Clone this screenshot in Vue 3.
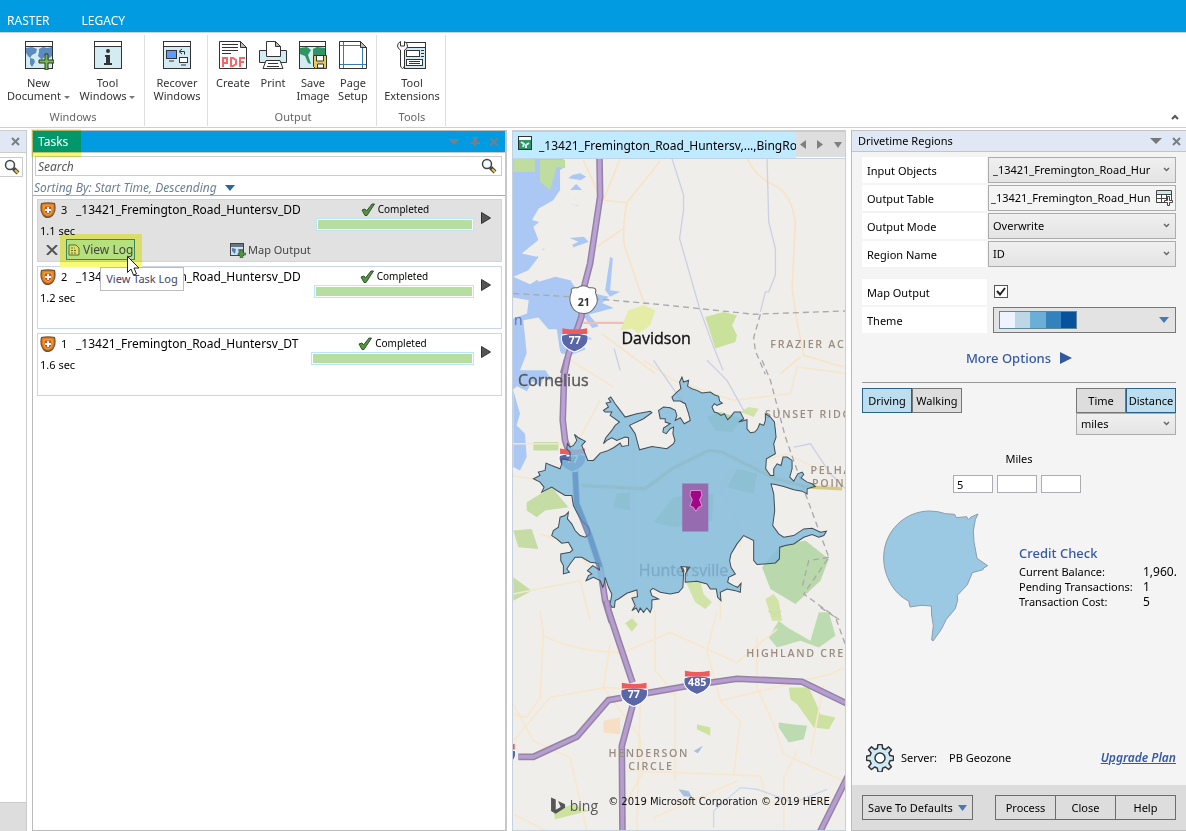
<script setup>
import { ref } from 'vue'

const tasks = ref([
  { id: 3, name: '_13421_Fremington_Road_Huntersv_DD', time: '1.1 sec', bar: 158, active: true },
  { id: 2, name: '_13421_Fremington_Road_Huntersv_DD', time: '1.2 sec', bar: 160, active: false },
  { id: 1, name: '_13421_Fremington_Road_Huntersv_DT', time: '1.6 sec', bar: 163, active: false }
])
const swatches = ['#eff3ff', '#bdd7e7', '#6baed6', '#3182bd', '#08519c']
const mapOutput = ref(true)
const miles = ref(['5', '', ''])
const mode = ref('Driving')
const measure = ref('Distance')
</script>

<template>
  <div class="app">
    <nav class="tabs">
      <a href="#raster">RASTER</a>
      <a href="#legacy">LEGACY</a>
    </nav>

    <header class="ribbon">
      <section class="group windows">
        <div class="tools">
          <button class="tool wide">
            <svg width="30" height="30" viewBox="0 0 30 30">
              <rect x="1.500" y="1.500" width="27" height="27" fill="#fff" stroke="#333" />
              <rect x="2" y="6" width="26" height="22" fill="#d3ecf3" />
              <path d="M2 8l6-1 5 2-1 4-4 2-2 3-2-2-2-3zM6 18l4 1 1 3-3 5-2-3zM15 9l4-2 4 1 5-1v9l-4 3-3-3-3 4-4-4 1-4z" fill="#5b8bbf" />
              <path d="M1 6.500h28" stroke="#333" />
              <path d="M21 14h3v6h6v3h-6v7h-3v-7h-6v-3h6z" fill="#72be44" stroke="#333" />
            </svg>
            <span>New<br>Document <i class="caret"></i></span>
          </button>
          <button class="tool wide">
            <svg width="30" height="30" viewBox="0 0 30 30">
              <rect x="1.500" y="1.500" width="27" height="27" fill="#d3ecf3" stroke="#333" />
              <path d="M2 2h26v4H2z" fill="#fff" /><path d="M1 6.500h28" stroke="#333" />
              <circle cx="15" cy="11" r="2" fill="#333" />
              <path d="M12 15h5v8h2v2h-8v-2h2v-6h-1z" fill="#333" />
            </svg>
            <span>Tool<br>Windows <i class="caret"></i></span>
          </button>
        </div>
        <h2>Windows</h2>
      </section>

      <section class="group recover">
        <div class="tools">
          <button class="tool">
            <svg width="30" height="30" viewBox="0 0 30 30">
              <rect x="1.500" y="1.500" width="27" height="27" fill="#d3ecf3" stroke="#333" />
              <path d="M2 2h26v4H2z" fill="#fff" /><path d="M1 6.500h28" stroke="#333" />
              <rect x="4.500" y="10.500" width="10" height="8" fill="#5d9bff" stroke="#333" />
              <rect x="17.500" y="17.500" width="8" height="5" fill="#fff" stroke="#333" />
              <path d="M7 21h5M19 25h5M18 11.500h4.500v3M20 9l-3 2.500 3 2.500" stroke="#333" fill="none" />
            </svg>
            <span>Recover<br>Windows</span>
          </button>
        </div>
      </section>

      <section class="group output">
        <div class="tools">
          <button class="tool slim">
            <svg width="30" height="30" viewBox="0 0 30 30">
              <path d="M1.500 1.500h21l6 6v21h-27z" fill="#fff" stroke="#333" />
              <path d="M22.500 1.500v6h6z" fill="#bbb" stroke="#333" />
              <path d="M4 4.500h16M4 7.500h16M4 10.500h16M4 13.500h9" stroke="#333" />
              <path d="M5 27v-9h4v5h-4M13 26v-8h2l3 2v4l-3 2zM22 27v-9h5M22 22h4" fill="none" stroke="#fa6464" stroke-width="2" />
            </svg>
            <span>Create</span>
          </button>
          <button class="tool slim">
            <svg width="30" height="30" viewBox="0 0 30 30">
              <path d="M1.500 10.500h27v12h-27z" fill="#d3ecf3" stroke="#333" />
              <path d="M8.500 16.500v-15h9l5 5v10z" fill="#fff" stroke="#333" />
              <path d="M17.500 1.500v5h5z" fill="#bbb" stroke="#333" />
              <path d="M8 20.500h14l3 8H5z" fill="#fff" stroke="#333" />
              <path d="M10 23.500h10M9 26.500h12" stroke="#333" />
            </svg>
            <span>Print</span>
          </button>
          <button class="tool slim">
            <svg width="30" height="30" viewBox="0 0 30 30">
              <rect x="1.500" y="1.500" width="26" height="27" fill="#d3ecf3" stroke="#333" />
              <path d="M2 2h25v4H2z" fill="#fff" /><path d="M1 6.500h27" stroke="#333" />
              <path d="M2 8l7-1 4 3-3 5 1 3 2 6-3-1-3-7-5-2zM15 9l4-2 8 1v10l-4-3-3 3-5-3z" fill="#2f9563" />
              <path d="M15.500 15.500h13v13h-11l-2-2z" fill="#e4cd55" stroke="#333" />
              <path d="M18.500 16v5h7v-5M19.500 28v-4h6v4z" fill="#fff" stroke="#333" />
            </svg>
            <span>Save<br>Image</span>
          </button>
          <button class="tool slim">
            <svg width="30" height="30" viewBox="0 0 30 30">
              <path d="M1.500 1.500h21l6 6v21h-27z" fill="#fff" stroke="#333" />
              <path d="M5.500 2v26M24.500 7v21M2 5.500h21M2 24.500h26" stroke="#3b79b8" />
              <path d="M22.500 1.500v6h6z" fill="#bbb" stroke="#333" />
            </svg>
            <span>Page<br>Setup</span>
          </button>
        </div>
        <h2>Output</h2>
      </section>

      <section class="group ext">
        <div class="tools">
          <button class="tool">
            <svg width="30" height="30" viewBox="0 0 30 30">
              <rect x="7.500" y="2.500" width="21" height="26" fill="#d3ecf3" stroke="#333" />
              <path d="M8 3h20v4H8z" fill="#fff" /><path d="M7 7.500h22" stroke="#333" />
              <rect x="9.500" y="10.500" width="13" height="6" fill="#fff" stroke="#333" />
              <rect x="9.500" y="19.500" width="16" height="6" fill="#fff" stroke="#333" />
              <path d="M12 21.500h11M12 23.500h11M24 10.500h3M24 13.500h3M24 16.500h3" stroke="#333" />
              <path d="M3.500 1.500Q.5 3 .5 6q.5 3 3 4v16q2 5 4 0V10q3-1 3-4 0-3-3-4.500V6h-4z" fill="#fff" stroke="#333" />
            </svg>
            <span>Tool<br>Extensions</span>
          </button>
        </div>
        <h2>Tools</h2>
      </section>

      <button class="collapse" aria-label="Collapse ribbon">
        <svg width="8" height="6" viewBox="0 0 8 6"><path d="M1 5l3-3 3 3" fill="none" stroke="#555" stroke-width="2" /></svg>
      </button>
    </header>

    <main class="docks">
      <aside class="stub">
        <div class="stub-head"><button aria-label="Close panel"><svg width="9" height="9" viewBox="0 0 9 9"><path d="M1 1l7 7M8 1l-7 7" stroke="#7a7f87" stroke-width="2" /></svg></button></div>
        <button class="stub-search" aria-label="Find">
          <svg width="16" height="16" viewBox="0 0 16 16"><circle cx="6" cy="6" r="4.500" fill="#f3fafd" stroke="#444" stroke-width="1.500" /><path d="M9.500 9.500l4.500 4.500" stroke="#444" stroke-width="4" /><path d="M11 11l3 3" stroke="#e8c84e" stroke-width="2" /></svg>
        </button>
        <div class="stub-foot"></div>
      </aside>

      <section class="tasks">
        <div class="tasks-head">
          <h3>Tasks</h3>
          <span class="head-icons">
            <svg width="12" height="6" viewBox="0 0 12 6"><path d="M0 0h12L6 6z" fill="#72818d" /></svg>
            <svg width="10" height="10" viewBox="0 0 10 10"><path d="M2 0h6v1H7v4h3v2H6v3H4V7H0V5h3V1H2z" fill="#72818d" /></svg>
            <svg width="8" height="8" viewBox="0 0 8 8"><path d="M0 0l8 8M8 0L0 8" stroke="#72818d" stroke-width="2" /></svg>
          </span>
        </div>
        <div class="search">
          <input type="text" placeholder="Search" aria-label="Search tasks">
          <svg width="16" height="16" viewBox="0 0 16 16"><circle cx="6" cy="6" r="4.500" fill="#f3fafd" stroke="#444" stroke-width="1.500" /><path d="M9.500 9.500l4.500 4.500" stroke="#444" stroke-width="4" /><path d="M11 11l3 3" stroke="#e8c84e" stroke-width="2" /></svg>
        </div>
        <button class="sorting">Sorting By: Start Time, Descending
          <svg width="10" height="6" viewBox="0 0 10 6"><path d="M0 0h10L5 6z" fill="#2b6a96" /></svg>
        </button>

        <div class="list">
          <article v-for="task in tasks" :key="task.id" class="card" :class="{ active: task.active }">
            <div class="card-top">
              <svg class="shield" width="16" height="16" viewBox="0 0 16 16">
                <path d="M1 1q7-1.500 14 0 1.500 6-.5 10Q13 15 9 16H6Q3 15 1.500 11-.5 7 1 1z" fill="#7a5233" />
                <path d="M2 2q6-1 12 0 1 5-.5 8.500Q12 14 8 14.500 4 14 2.500 10.500 1 7 2 2z" fill="#d98324" />
                <path d="M3.500 3.500q4.500-.8 9 0 .6 4-.5 6.500Q11 12.500 8 13 5 12.500 4 10 3 7.500 3.500 3.500z" fill="#f2a33a" />
                <path d="M5 4.500h6q.8 3 0 5.500-1 1.500-3 2-2-.5-3-2-.8-2.500 0-5.500z" fill="#cf4a28" />
                <path d="M7 5h2v2h2v2H9v2H7V9H5V7h2z" fill="#fff" />
              </svg>
              <span class="num">{{ task.id }}</span>
              <span class="name">{{ task.name }}</span>
              <div class="status" :style="{ width: task.bar + 'px' }">
                <span class="done">
                  <svg width="14" height="13" viewBox="0 0 14 13"><path d="M1 7l3-1 1.500 2L11 1h2.500L6 12.500H4z" fill="#4c9a39" stroke="#3a4a38" /></svg>
                  Completed
                </span>
                <div class="bar"></div>
              </div>
              <button class="play" aria-label="Expand task"><svg width="10" height="12" viewBox="0 0 10 12"><path d="M.5 .5l9 5.500-9 5.500z" fill="#555" stroke="#333" /></svg></button>
            </div>
            <div class="time">{{ task.time }}</div>
            <div v-if="task.active" class="actions">
              <button class="remove" aria-label="Remove task"><svg width="12" height="10" viewBox="0 0 12 10"><path d="M1 0l10 10M11 0L1 10" stroke="#555" stroke-width="2" /></svg></button>
              <span class="log-wrap">
                <button class="log">
                  <svg width="12" height="12" viewBox="0 0 12 12"><path d="M1 1h7l3 3v7H1z" fill="#e3e36a" stroke="#5c6a2c" /><path d="M3 4h4M3 6.500h6M3 9h6" stroke="#5c6a2c" stroke-dasharray="2 1" /></svg>
                  View Log
                </button>
                <span class="tip" role="tooltip">View Task Log</span>
                <svg class="cursor" width="13" height="20" viewBox="0 0 13 20"><path d="M.5 .5v16l3.500-3.500 2.500 6 3-1-2.500-6h5z" fill="#fff" stroke="#222" /></svg>
              </span>
              <button class="mapout">
                <svg width="16" height="15" viewBox="0 0 16 15"><rect x=".5" y=".5" width="13" height="12" fill="#cfe4ef" stroke="#444" /><path d="M1 1h12v3H1z" fill="#687684" /><path d="M2 5l4 1-1 5-3-3zM8 6h5v4l-4 1z" fill="#4f82b7" /><path d="M10 7h3v3h3v2h-3v3h-3v-3H8v-2h2z" fill="#4d9b3a" stroke="#444" stroke-width=".5" /></svg>
                Map Output
              </button>
            </div>
          </article>
        </div>
      </section>

      <section class="map-dock">
        <div class="map-head">
          <div class="map-tab">
            <svg width="15" height="15" viewBox="0 0 15 15"><rect x=".5" y=".5" width="13" height="13" fill="#2f9563" stroke="#333" /><path d="M1 1h12v3H1z" fill="#fff" /><path d="M3 6l3 2-1 3M8 12V9l3-2" stroke="#d3ecf3" stroke-width="2" fill="none" /></svg>
            <span>_13421_Fremington_Road_Huntersv,...,BingRoads</span>
          </div>
          <div class="map-nav">
            <svg width="6" height="9" viewBox="0 0 6 9"><path d="M6 0v9L0 4.500z" fill="#808080" /></svg>
            <svg width="6" height="9" viewBox="0 0 6 9"><path d="M0 0v9l6-4.500z" fill="#808080" /></svg>
            <svg width="8" height="6" viewBox="0 0 8 6"><path d="M0 0h8L4 6z" fill="#808080" /></svg>
          </div>
        </div>
        <svg class="map" viewBox="513 159 332 670" preserveAspectRatio="xMinYMin slice">
          <rect x="500" y="150" width="900" height="1200" fill="#f0eeeb" />
          <!-- north -->
          <g transform="translate(510 130) scale(.33333)">
            <path d="M0 80h165l-18 30 30 0-12 30 45-10 18 10-32 20 25 25-45 8 35 20-5 15-75-18-45 25-20 35 55 15-15 30 40-10 15 20 60-5 15 15-55 20-45-15-60 30 25 30-35 20 20 35 50-15 45 10 25 40 45 0 45 10-20 18 35 15-75 20 30 35-20 5-25-35-10 40 35 30-35 0 15 30-40 15-50-5-25 30-5 20 20 35-25-10-10 25-25-15-15 30-30-15-25 20V570l55-20 5-40-60-10z" fill="#abc8f4" />
            <path d="M150 120l25-15 35 10-35 30 35 5-30 30 45 0-30 25 40 5-10 20-55-10-20 20-30-15 30-45zM70 290l30-25 35 5 5-20 50 5 30 30-50 35 35 15-60 30-45-10-20 25-45-10 50-40zM10 440l45-20 35-45 30-40 50-15 20 30-15 35 40 5-25 50-80-8-50 30zM40 570l45-8 30 35 25 0 10 65 30 58H30l20-50z" fill="#f0eeeb" />
            <path d="M10 85h65v40H10zM90 90h75v25l-25-5-20 70-30-25z" fill="#c0dda0" />
            <path d="M285 480l15-100 8 5-8 95 30 5-30 15z" fill="#abc8f4" />
            <path d="M330 600l25-60 45-15 35 15-15 45-35 25-20-15z" fill="#e4eca5" />
            <path d="M585 560l55-15 40 10-15 30 15 30-5 20-60 20z" fill="#c9e19b" />
            <g fill="none" stroke="#f8e3c6" stroke-width="5">
              <path d="M330 85L280 210l70 8 100-125M350 218q-20 110 0 150l55 160M260 350l80-55M710 85q30 60 80 80t65 110l-10 200 15 100 20 100 120 35M870 680l-60 50M220 90l40 90M275 610l160 120" />
            </g>
            <path d="M485 85l35 110v45l-12 85 60 210 40 110 30 75M770 85l5 190 20 80v80l-20 50-10 0-15 60M312 655l18 65" fill="none" stroke="#ccd0e4" stroke-width="4" />
            <path d="M10 490l180 10 250 22 290 30 280-10M750 552l-20 70 5 40 30 70" fill="none" stroke="#aaa8ab" stroke-width="4" stroke-dasharray="18 12" />
            <path d="M220 578h120" stroke="#f4bcb3" stroke-width="7" />
            <path d="M268 80l2 120-30 200-18 70-8 90-35 100-20 70" fill="none" stroke="#9384a6" stroke-width="20" />
            <path d="M268 80l2 120-30 200-18 70-8 90-35 100-20 70" fill="none" stroke="#bba1d5" stroke-width="11" />
            <path d="M184 485q-5-15 18-12 18-13 36 0 24-3 18 14 12 28-2 43-12 20-34 20-26-2-34-20-12-20-2-45z" fill="#fff" stroke="#666" stroke-width="3" />
            <text x="221" y="528" class="badge dark">21</text>
            <g id="interstate"><path d="M155 615q38-12 78 0 8 32-40 50-46-18-38-50z" fill="#5966a8" stroke="#fff" stroke-width="3" /><path d="M157 594q38 8 74 0v17h-74z" fill="#ef5a5d" /></g>
            <text x="194" y="640" class="badge">77</text>
            <text x="12" y="585" class="edge">n</text>
            <text x="334" y="641" class="city strong">Davidson</text>
            <text x="780" y="652" class="area">FRAZIER ACRES</text>
          </g>
          <!-- centre -->
          <g transform="translate(510 360) scale(.33333)">
            <path d="M10 90l20 70-10 35 25 25 5 70-20 40-20-10z" fill="#abc8f4" />
            <path d="M70 245h75v25H70zM50 425l75-45 50 60-70 10-25 20-30-20zM10 510l55-5 20 60-60-5zM10 650l55 40-55 30z" fill="#c5dda5" />
            <path d="M525 660h45l10 40 25 25-20 20-30-20zM765 715l25-15 15 20 10 60h-30zM690 155l25-15 30 5-15 25z" fill="#d2e3a8" />
            <path d="M755 620l55-65 75-15 70 55-25 65-75 70-75-45z" fill="#b9d9ad" />
            <path d="M320 400l40-5v55l-50-10zM430 485l60-75 120-10-5 80-110 20zM680 325l60 15-10 60-80-20zM590 170l40-15 65 20-30 40-50-5z" fill="#bcd79d" />
            <g fill="none" stroke="#f4e7cf" stroke-width="5">
              <path d="M0 250h200l70-130M310 80L180 0M400 0l90 60 180 60 170-20 20-80 150 20M10 385l-70-10M90 520l90 30 60 70M370 200v580M10 700l200-40 30 120M630 700v80M690 560v-60l-60-110 30-60 170-50 160 80M0 345q200 35 400 35l130-85 90-20 130 60 150 40h110" />
            </g>
            <path d="M215 375l190 10 80-60 110-55 40 5 160 80 100 25 100 5" fill="none" stroke="#d5cc7e" stroke-width="10" />
            <path d="M430 0l90 130M590 0l60 60 50 90M850 260l50-10 60 90 50 50" fill="none" stroke="#ccd0e4" stroke-width="4" />
            <path d="M755 0l25 60 45 170 60 170 70 190-75 110 110 80M955 590l-60 10-20 80" fill="none" stroke="#aaa8ab" stroke-width="4" stroke-dasharray="18 12" />
            <path d="M172-5l-10 50-4 135 7 60 30 90 5 100 40 100 30 90 15 100 20 65" fill="none" stroke="#9384a6" stroke-width="20" />
            <path d="M172-5l-10 50-4 135 7 60 30 90 5 100 40 100 30 90 15 100 20 65" fill="none" stroke="#bba1d5" stroke-width="11" />
            <use href="#interstate" x="-7" y="-330" />
            <text x="187" y="309" class="badge">77</text>
            <text x="24" y="76" class="city soft">Cornelius</text>
            <text x="764" y="174" class="area">SUNSET RIDGE</text>
            <text x="900" y="340" class="area">PELHAM</text>
            <text x="905" y="379" class="area">POINTE</text>
            <text x="386" y="647" class="city soft">Huntersville</text>
            <path d="M515 50L520 65 535 60 532 78 545 85 560 90 575 98 600 95 612 103 625 108 628 122 636 128 620 135 612 130 605 140 612 155 622 158 632 165 642 160 652 178 662 168 672 155 690 155 695 165 700 175 685 185 710 178 710 205 720 217 733 215 742 205 748 190 760 195 765 180 765 160 780 170 792 185 795 210 797 230 790 250 795 280 768 295 766 325 780 345 790 345 790 325 800 310 812 315 818 290 830 290 845 300 845 325 838 350 850 362 862 340 875 335 880 342 872 352 890 365 905 370 915 378 900 382 890 385 890 400 875 392 850 388 820 378 795 372 782 370 790 400 793 450 787 495 805 520 820 530 850 525 880 505 905 503 930 515 948 512 940 525 925 530 905 522 880 530 850 550 825 555 808 560 807 595 795 607 740 612 730 600 730 540 700 525 680 550 662 580 658 600 662 620 675 640 655 650 652 665 670 675 682 680 692 668 690 695 675 690 650 685 630 695 632 720 622 710 618 685 600 685 590 670 560 662 525 665 525 640 538 620 512 618 520 640 518 680 505 695 480 700 450 695 428 683 420 690 425 705 445 715 425 718 425 740 420 755 410 742 400 755 390 742 385 755 378 742 365 750 375 735 365 712 382 708 380 688 350 698 325 715 315 720 313 740 305 740 300 730 305 700 295 680 285 650 282 670 278 680 270 660 250 650 228 660 235 645 245 640 232 630 248 615 268 628 265 608 240 605 215 590 195 590 180 610 170 625 178 635 160 640 160 615 152 600 152 580 180 575 188 568 175 545 155 548 140 535 125 525 130 510 145 500 150 470 165 465 175 455 172 475 185 490 195 510 210 525 225 530 240 520 235 500 215 480 200 455 190 435 185 405 165 405 140 390 125 380 95 395 102 380 90 365 70 355 90 345 85 335 105 330 108 308 125 315 150 325 155 310 155 295 180 300 180 275 170 265 172 250 180 260 190 255 200 240 193 222 205 232 226 243 215 255 225 280 233 300 250 300 270 278 290 272 310 262 330 248 335 258 355 255 355 232 345 230 320 240 305 232 290 240 280 250 287 232 305 210 315 195 328 185 300 165 305 155 285 155 280 150 295 140 288 128 302 125 295 115 302 110 315 130 330 150 345 170 380 160 420 153 425 157 400 175 358 195 375 220 388 268 425 258 470 265 490 250 494 240 488 220 490 200 480 205 468 220 458 215 460 203 480 190 465 185 465 175 450 175 445 150 460 140 480 142 495 150 500 165 495 180 510 172 522 190 540 180 535 160 525 130 510 122 490 122 485 110 500 95 512 85 508 65z" fill="#83bbdc" fill-opacity=".84" stroke="#424c55" stroke-width="3" />
            <path d="M195 335l5 95 40 100 30 90" fill="none" stroke="#5c91c4" stroke-width="15" opacity=".7" />
            <path d="M516 369h78v144h-78z" fill="#976baf" />
            <path d="M542 390h30l3 14-7 14 7 18-9 4-9 12-9-12-9-4 7-18-7-14z" fill="#a00786" stroke="#df8cd0" stroke-width="3" />
          </g>
          <!-- south -->
          <g transform="translate(510 610) scale(.33333)">
            <path d="M345 38l20-15 18 18-18 22zM770 0h45l-20 20zM835 230h60l25 55 10 25 45 10-20 35-45-5-50-70-20-15zM130 600l60-20 45 20-100 25zM560 340l40 10v25l-40-20z" fill="#cde2a0" />
            <path d="M775 80l30-50 25 20 70 40 25-85h30l20 70-50 35-55-20-70 20zM805 335l40 5 45 5-10 40-45 10-30-45z" fill="#bddbb1" />
            <path d="M280 330l50-10v50l-50-5z" fill="#f6dfc5" />
            <path d="M550 420l28-15-15 22zM505 535l30 5 10 18-25-2z" fill="#a8bfdf" />
            <g fill="none" stroke="#f7e7cd" stroke-width="5">
              <path d="M90 0l10 70-10 190-40 60-40-10M100 75q100 50 240 50l140-60 200 90 120-100M300 100l-20 130 110 150 10 100-50 90M435 0v180l60 70v260M620 0l-30 120 40 150 60 60-20 160M740 80v150l50 110 30 90 180 80M350 480l400 15 20 80 230-10M10 280l60 110 110 50 50 220M10 390l110-130 170-30 210 20M860 420l-40 80v160M390 280l-10 380M10 610l100 50M630 270l330-80 40-20M430 620l250-110M940 220l-40 210" />
            </g>
            <path d="M610 650v-50l80-70 50 5 110 40 100-40" fill="none" stroke="#cbd9eb" stroke-width="4" />
            <path d="M930-10l45 30 40 110" fill="none" stroke="#aaa8ab" stroke-width="4" stroke-dasharray="18 12" />
            <path d="M289-30l6 30 35 105 37 110M367 285l-32 120 2 265M25 438h45l130-60 95-110 40-7M410 247l130-23 140-20 195 9 140 68M1015 490l-90 180" fill="none" stroke="#9384a6" stroke-width="20" />
            <path d="M289-30l6 30 35 105 37 110M367 285l-32 120 2 265M25 438h45l130-60 95-110 40-7M410 247l130-23 140-20 195 9 140 68M1015 490l-90 180" fill="none" stroke="#b79ccf" stroke-width="11" />
            <use href="#interstate" x="178" y="-378" />
            <text x="371" y="262" class="badge">77</text>
            <use href="#interstate" x="367" y="-414" />
            <text x="561" y="227" class="badge">485</text>
            <use href="#interstate" x="-217" y="-195" />
            <text x="708" y="138" class="area">HIGHLAND CREEK</text>
            <text x="295" y="438" class="area">HENDERSON</text>
            <text x="354" y="478" class="area">CIRCLE</text>
            <path d="M123 560l14 6v30l15-8-8-18 21 10v10l-28 18-14-8z" fill="#555" />
            <text x="179" y="600" class="bing">bing</text>
            <text x="294" y="582" class="copy">© 2019 Microsoft Corporation © 2019 HERE</text>
          </g>
        </svg>
      </section>

      <section class="drive">
        <div class="drive-head">
          <h3>Drivetime Regions</h3>
          <svg width="12" height="6" viewBox="0 0 12 6"><path d="M0 0h12L6 6z" fill="#777" /></svg>
          <svg width="9" height="9" viewBox="0 0 9 9"><path d="M1 1l7 7M8 1l-7 7" stroke="#7a7f87" stroke-width="2" /></svg>
        </div>
        <form class="drive-body" @submit.prevent>
          <div class="fields">
            <label for="in">Input Objects</label>
            <div class="pick"><select id="in"><option>_13421_Fremington_Road_Hur</option></select><svg width="7" height="5" viewBox="0 0 7 5"><path d="M1 1l2.500 2.500L6 1" fill="none" stroke="#666" stroke-width="1.500" /></svg></div>
            <label for="table">Output Table</label>
            <div class="table-field">
              <input id="table" type="text" value="_13421_Fremington_Road_Hun">
              <button aria-label="New table"><svg width="17" height="16" viewBox="0 0 17 16"><path d="M.5 .5h15v12H.5z" fill="#fff" stroke="#444" /><path d="M1 1h14v3H1z" fill="#c5e9e4" /><path d="M0 4.500h16M0 8.500h12M5.500 4v9M10.500 4v6" stroke="#444" /><path d="M11.500 6.500h2v4h3v2h-3v3h-2v-3h-3v-2h3z" fill="#fff" stroke="#444" /></svg></button>
            </div>
            <label for="omode">Output Mode</label>
            <div class="pick"><select id="omode"><option>Overwrite</option></select><svg width="7" height="5" viewBox="0 0 7 5"><path d="M1 1l2.500 2.500L6 1" fill="none" stroke="#666" stroke-width="1.500" /></svg></div>
            <label for="region">Region Name</label>
            <div class="pick"><select id="region"><option>ID</option></select><svg width="7" height="5" viewBox="0 0 7 5"><path d="M1 1l2.500 2.500L6 1" fill="none" stroke="#666" stroke-width="1.500" /></svg></div>
          </div>
          <div class="fields second">
            <label for="mo">Map Output</label>
            <div class="check"><input id="mo" v-model="mapOutput" type="checkbox"><svg v-if="mapOutput" width="10" height="9" viewBox="0 0 10 9"><path d="M1 4l3 3.500L9 1" fill="none" stroke="#222" stroke-width="2" /></svg></div>
            <label for="theme">Theme</label>
            <button id="theme" class="theme" aria-label="Theme">
              <span class="ramp"><i v-for="c in swatches" :key="c" :style="{ background: c }"></i></span>
              <svg width="10" height="6" viewBox="0 0 10 6"><path d="M0 0h10L5 6z" fill="#4678bd" /></svg>
            </button>
          </div>
          <button class="more">More Options <svg width="12" height="12" viewBox="0 0 12 12"><path d="M0 0l12 6-12 6z" fill="#3158a0" /></svg></button>
          <hr>
          <div class="modes">
            <div class="pair">
              <button :class="{ on: mode === 'Driving' }" @click="mode = 'Driving'">Driving</button>
              <button :class="{ on: mode === 'Walking' }" @click="mode = 'Walking'">Walking</button>
            </div>
            <div class="right">
              <div class="pair">
                <button :class="{ on: measure === 'Time' }" @click="measure = 'Time'">Time</button>
                <button :class="{ on: measure === 'Distance' }" @click="measure = 'Distance'">Distance</button>
              </div>
              <div class="pick small"><select aria-label="Unit"><option>miles</option></select><svg width="7" height="5" viewBox="0 0 7 5"><path d="M1 1l2.500 2.500L6 1" fill="none" stroke="#666" stroke-width="1.500" /></svg></div>
            </div>
          </div>
          <div class="miles-label">Miles</div>
          <div class="miles"><input v-for="(m, i) in miles" :key="i" v-model="miles[i]" type="text" :aria-label="'Miles ' + (i + 1)"></div>
          <div class="credit">
            <svg width="108" height="134" viewBox="0 0 324 402">
              <path d="M5 147C5 65 70 6 143 6q25 0 47 8l28 2 5 10 31-3 5 9 8-8 21-9-8 17-6 34 2 32 9 50 32 22-12 7-2 5-32 9-15 36-30 32 1 15-7 25-27 32-15 30-25 35-4-3 3-27 2-16-5-32-1-27-31-2-33 5-4-18C35 255 5 200 5 147z" fill="#9bc8e2" stroke="#8b9daa" stroke-width="3" />
            </svg>
            <div class="credit-text">
              <h4>Credit Check</h4>
              <dl><dt>Current Balance:</dt><dd>1,960.00</dd><dt>Pending Transactions:</dt><dd>1</dd><dt>Transaction Cost:</dt><dd>5</dd></dl>
            </div>
          </div>
          <div class="server">
            <svg width="28" height="28" viewBox="0 0 28 28">
              <path d="M12 .5h4l.7 4 2.700 1 3.200-2.600 2.800 2.900-2.500 3.200 1.100 2.600 3.500 .6v4l-3.500 .6-1.100 2.700 2.500 3.200-2.800 2.800-3.200-2.500-2.700 1.100-.7 3.900h-4l-.7-3.900-2.600-1.100-3.200 2.500-2.900-2.800 2.500-3.200-1.100-2.700-3.500-.6v-4l3.500-.6 1.100-2.600-2.500-3.200 2.900-2.900 3.200 2.600 2.600-1z" fill="#cfeaf4" stroke="#333" stroke-width="1.500" stroke-linejoin="round" /><circle cx="14" cy="14" r="5" fill="#fff" stroke="#333" stroke-width="1.500" />
            </svg>
            <span>Server:</span><span class="zone">PB Geozone</span>
            <a href="#upgrade">Upgrade Plan</a>
          </div>
        </form>
        <footer>
          <button class="save">Save To Defaults <svg width="9" height="6" viewBox="0 0 9 6"><path d="M0 0h9L4.500 6z" fill="#4678bd" /></svg></button>
          <div class="final"><button>Process</button><button>Close</button><button>Help</button></div>
        </footer>
      </section>
    </main>
  </div>
</template>

<style>
body { margin: 0; }
</style>

<style scoped>
* { box-sizing: border-box; }
.app { display: flex; flex-direction: column; height: 100vh; overflow: hidden; background: #fff; color: #000; font: 12px/16px "Noto Sans", "Open Sans", sans-serif; }
button, input, select { font: inherit; color: inherit; margin: 0; padding: 0; border: 0; background: none; border-radius: 0; }
h2, h3, h4, dl, dd { margin: 0; font-weight: 400; font-size: 12px; }
svg { display: block; flex: none; }
.tabs { flex: none; display: flex; gap: 32px; height: 33px; padding: 13px 7px 0; background: #009be1; border-bottom: 1px solid #c9d3d9; }
.tabs a { color: #fff; text-decoration: none; }
.ribbon { flex: none; position: relative; display: flex; height: 95px; padding-top: 2px; border-bottom: 1px solid #cfcfcf; }
.group { position: relative; display: flex; flex-direction: column; height: 91px; border-right: 1px solid #dedede; color: #333; }
.windows { width: 145px; }
.recover { width: 63px; }
.output { width: 169px; }
.ext { width: 69px; }
.tools { display: flex; justify-content: center; padding: 5px 0 0 2px; height: 74px; }
.tool { display: flex; flex-direction: column; align-items: center; gap: 6px; width: 60px; line-height: 13px; font-size: 11px; white-space: nowrap; }
.tool.wide { width: 69px; }
.tool.slim { width: 40px; }
.caret { display: inline-block; vertical-align: middle; border: 3px solid transparent; border-top-color: #777; border-bottom: 0; }
.group h2 { text-align: center; color: #666; line-height: 16px; font-size: 11px; padding-left: 2px; }
.collapse { position: absolute; right: 7px; bottom: 7px; }
.docks { flex: 1; min-height: 0; display: grid; grid-template-columns: 27px 475px minmax(0, 1fr) 335px; column-gap: 5px; padding-top: 2px; }
.stub { display: flex; flex-direction: column; min-height: 0; border: solid #ccc; border-width: 1px 1px 0 0; }
.stub-head { display: flex; align-items: center; height: 22px; padding-left: 11px; background: #dfe8f4; border-bottom: 1px solid #ccc; }
.stub-search { margin: 4px 3px 0 0; height: 20px; padding-left: 4px; border: solid #ccc; border-width: 1px 1px 1px 0; }
.stub-foot { margin-top: auto; height: 29px; background: #ddd; border-top: 1px solid #ccc; }
.tasks { display: flex; flex-direction: column; min-height: 0; border: 1px solid #bbb; border-right: 2px solid #c8c8c8; }
.tasks-head { flex: none; position: relative; display: flex; justify-content: space-between; align-items: center; height: 22px; padding: 0 7px 0 5px; background: #009be1; border-bottom: 1px solid #c8c8c8; }
.tasks-head h3 { color: #fff; position: relative; z-index: 1; }
.tasks-head::before { content: ""; position: absolute; left: -2px; top: -2px; width: 50px; height: 28px; background: #f4f87a; mix-blend-mode: multiply; }
.head-icons { display: flex; align-items: center; gap: 10px; }
.search { flex: none; display: flex; align-items: center; margin: 3px 3px 0 2px; height: 20px; border: 1px solid #ccc; padding-right: 4px; }
.search input { flex: 1; padding: 1px 0 0 2px; outline: 0; }
.search input::placeholder { color: #555; font-style: italic; opacity: 1; }
.sorting { flex: none; display: flex; align-items: center; gap: 8px; height: 15px; padding-left: 1px; margin-top: 4px; color: #6a7f94; font-style: italic; }
.list { flex: 1; min-height: 0; display: flex; flex-direction: column; gap: 4px; border-top: 1px solid #aaa; padding: 3px 3px 0 4px; }
.card { flex: none; height: 63px; border: 1px solid #c9d6e5; padding: 1px 10px 0 2px; }
.card.active { background: #e1e1e1; position: relative; z-index: 1; }
.card-top { display: flex; height: 22px; }
.shield { margin-top: 1px; }
.num { width: 20px; padding-left: 5px; line-height: 18px; font-size: 11px; }
.name { flex: 1; white-space: nowrap; line-height: 18px; }
.status { flex: none; margin-right: 7px; }
.done { display: flex; justify-content: center; align-items: center; gap: 3px; height: 16px; margin-bottom: 1px; font-size: 10px; }
.bar { height: 13px; border: 1px solid #b8e6fb; background: #b6dea0; box-shadow: inset 0 0 0 1px #fff; }
.play { padding-top: 10px; height: 23px; }
.time { line-height: 16px; font-size: 11px; }
.actions { display: flex; align-items: center; height: 22px; color: #444; }
.remove { padding-left: 6px; width: 26px; }
.log-wrap { position: relative; width: 164px; height: 22px; }
.log-wrap::before { content: ""; position: absolute; left: -6px; top: -5px; width: 82px; height: 33px; background: #f7fb76; mix-blend-mode: multiply; }
.log { position: relative; display: flex; align-items: center; gap: 3px; width: 69px; height: 21px; padding-left: 1px; white-space: nowrap; background: #b4e07e; border: 1px solid #35865a; }
.tip { position: absolute; left: 34px; top: 28px; width: 84px; line-height: 22px; border: 1px solid #bbb; background: #fff; text-align: center; white-space: nowrap; color: #446; font-size: 11px; }
.cursor { position: absolute; left: 61px; top: 17px; }
.mapout { display: flex; align-items: center; gap: 2px; font-size: 11px; }
.map-dock { display: flex; flex-direction: column; min-height: 0; border: 1px solid #c5d0de; border-top: 2px solid #ccc; }
.map-head { flex: none; display: flex; height: 27px; border-bottom: 1px solid #c2d3e8; background: #fff; }
.map-tab { flex: 1; min-width: 0; display: flex; gap: 6px; padding: 4px 0 0 5px; height: 26px; overflow: hidden; white-space: nowrap; background: #bfeaff; }
.map-tab span { line-height: 20px; }
.map-nav { flex: none; display: flex; align-items: center; gap: 11px; width: 49px; height: 25px; padding-left: 4px; background: #dedede; }
.map { flex: 1; min-height: 0; width: 100%; }
.badge { font: bold 32px "Open Sans", sans-serif; fill: #fff; text-anchor: middle; }
.badge.dark { fill: #333; }
.city { font: 48px "Open Sans", sans-serif; }
.strong { fill: #111; stroke: #111; stroke-width: 1; }
.soft { fill: #555; stroke: #555; stroke-width: 1; }
.edge { font: 42px "Open Sans", sans-serif; fill: #5873b5; }
.area { font: 600 32px "Open Sans", sans-serif; letter-spacing: 5px; fill: #9a8c80; }
.bing { font: 42px "Open Sans", sans-serif; fill: #555; }
.copy { font: 30px "DejaVu Sans", sans-serif; fill: #111; }
.drive { display: flex; flex-direction: column; min-width: 0; min-height: 0; background: #f4f4f4; border-left: 1px solid #bbb; border-bottom: 1px solid #bbb; font-size: 11px; }
.drive-head { flex: none; display: flex; align-items: center; gap: 10px; height: 22px; padding: 0 5px 0 6px; background: #dfe8f4; border: solid #c4c4c4; border-width: 1px 0; }
.drive-head h3 { flex: 1; font-size: 11px; }
.drive-body { flex: 1; min-height: 0; display: flex; flex-direction: column; padding: 5px 10px 0; }
.fields { display: grid; grid-template-columns: 125px minmax(0, 1fr); gap: 2px 1px; grid-auto-rows: 26px; }
.second { margin-top: 12px; }
.fields label { background: #fff; padding-left: 5px; line-height: 28px; }
.pick { position: relative; background: linear-gradient(#f0f0f0, #e4e4e4); border: 1px solid #acacac; }
.pick select { appearance: none; width: 100%; height: 100%; padding-left: 4px; outline: 0; }
.pick svg { position: absolute; right: 5px; top: 9px; }
.table-field { display: flex; align-items: center; gap: 2px; border: 1px solid #acacac; padding: 0 2px; }
.table-field input { flex: 1; min-width: 0; outline: 0; }
.check { position: relative; padding: 6px; }
.check input { appearance: none; display: block; width: 14px; height: 13px; background: #fff; border: 1px solid #555; }
.check svg { position: absolute; left: 8px; top: 8px; }
.theme { display: flex; align-items: center; justify-content: space-between; margin-left: 5px; padding: 0 6px 0 5px; border: 1px solid #777; background: #e3e3e3; }
.ramp { display: flex; border: 1px solid #5f8797; height: 18px; width: 78px; }
.ramp i { flex: 1; }
.more { align-self: center; display: flex; align-items: center; gap: 9px; margin-top: 16px; height: 18px; font-size: 13px; font-weight: 500; color: #3559a5; }
hr { width: 100%; height: 1px; margin: 15px 0 5px; border: 0; background: #999; }
.modes { display: flex; justify-content: space-between; align-items: flex-start; }
.pair { display: flex; }
.pair button { width: 50px; height: 25px; border: 1px solid #777; background: #ddd; white-space: nowrap; display: flex; align-items: center; justify-content: center; }
.pair button.on { background: #bcdeef; border-color: #2a628b; }
.small { height: 22px; }
.small svg { top: 7px; }
.miles-label { text-align: center; margin-top: 16px; }
.miles { display: flex; justify-content: center; gap: 4px; margin: 8px 4px 0 0; }
.miles input { width: 40px; height: 18px; padding-left: 3px; background: #fff; border: 1px solid #abadb3; }
.credit { display: flex; gap: 29px; margin: 16px 0 0 20px; }
.credit-text { flex: 1; min-width: 0; padding-top: 35px; }
.credit h4 { font-size: 13px; line-height: 18px; font-weight: 500; color: #3559a5; }
.credit dl { display: grid; grid-template-columns: 124px minmax(0, 1fr); line-height: 15px; margin-top: 2px; font-size: 11px; overflow: hidden; }
.credit dd { overflow: hidden; white-space: nowrap; }
.server { display: flex; align-items: center; margin-top: auto; margin-bottom: 13px; padding-left: 4px; }
.server span { margin-left: 7px; }
.server .zone { margin-left: 12px; }
.server a { margin-left: auto; color: #3559a5; font-size: 12px; font-style: italic; font-weight: 600; }
footer { flex: none; display: flex; justify-content: space-between; height: 45px; padding: 10px 10px 0; background: #dcdcdc; }
footer button { height: 25px; width: 61px; margin-left: -1px; border: 1px solid #6c6c6c; background: #ddd; }
footer .save { display: flex; align-items: center; justify-content: center; gap: 5px; width: 111px; margin: 0; white-space: nowrap; }
.final { display: flex; }
</style>
